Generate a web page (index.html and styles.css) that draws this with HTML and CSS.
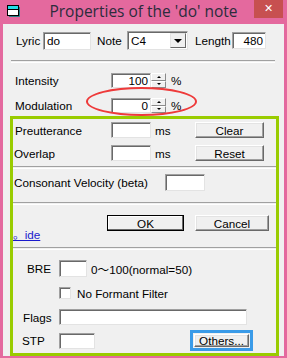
FILE: index.html
```html
<!DOCTYPE html>
<html lang="en">
<head>
  <meta charset="UTF-8">
  <title>Properties of the 'do' note</title>
  <link rel="stylesheet" href="styles.css">
</head>
<body>
  <div class="window">
    <div class="titlebar">
      <svg class="app-icon" width="13" height="12" viewBox="0 0 13 12">
        <rect x="0.5" y="0.5" width="11" height="10" fill="#fff" stroke="#000"/>
        <rect x="1" y="1" width="10" height="3" fill="#22dde8"/>
        <line x1="1" y1="4.5" x2="11" y2="4.5" stroke="#000"/>
        <path d="M12.5 2v9.5H2" stroke="#2a7f86" fill="none"/>
      </svg>
      <div class="title">Properties of the 'do' note</div>
      <div class="close">&#10005;</div>
    </div>

    <div class="client">
      <div class="row top-row">
        <span class="lbl lbl-lyric">Lyric</span>
        <span class="edit edit-lyric">do</span>
        <span class="lbl lbl-note">Note</span>
        <span class="combo">
          <span class="combo-val">C4</span>
          <span class="combo-btn"></span>
        </span>
        <span class="lbl lbl-length">Length</span>
        <span class="edit edit-length num">480</span>
      </div>

      <div class="sep sep-top"></div>

      <div class="row spin-row first">
        <span class="lbl lbl-wide">Intensity</span>
        <span class="edit edit-spin num">100</span>
        <span class="spin"><span class="spin-up"></span><span class="spin-down"></span></span>
        <span class="unit">%</span>
      </div>
      <div class="row spin-row">
        <span class="lbl lbl-wide">Modulation</span>
        <span class="edit edit-spin num">0</span>
        <span class="spin"><span class="spin-up"></span><span class="spin-down"></span></span>
        <span class="unit">%</span>
      </div>

      <div class="group">
        <div class="row ms-row first">
          <span class="lbl lbl-group pre">Preutterance</span>
          <span class="edit edit-ms"></span>
          <span class="ms">ms</span>
          <span class="btn btn-side">Clear</span>
        </div>
        <div class="row ms-row">
          <span class="lbl lbl-group">Overlap</span>
          <span class="edit edit-ms"></span>
          <span class="ms">ms</span>
          <span class="btn btn-side">Reset</span>
        </div>

        <div class="sep sep-group"></div>

        <div class="row velocity-row">
          <span class="lbl lbl-velocity">Consonant Velocity (beta)</span>
          <span class="edit edit-velocity"></span>
        </div>

        <div class="sep sep-group sep-wide"></div>

        <div class="row action-row">
          <a class="link" href="#">。ide</a>
          <span class="btn btn-ok">OK</span>
          <span class="btn btn-cancel">Cancel</span>
        </div>

        <div class="sep sep-group sep-after"></div>

        <div class="row bre-row">
          <span class="lbl lbl-bre">BRE</span>
          <span class="edit edit-bre"></span>
          <span class="hint">0〜100(normal=50)</span>
        </div>
        <div class="row check-row">
          <span class="checkbox"></span>
          <span class="check-text">No Formant Filter</span>
        </div>
        <div class="row flags-row">
          <span class="lbl lbl-flags">Flags</span>
          <span class="edit edit-flags"></span>
        </div>
        <div class="row stp-row">
          <span class="lbl lbl-stp">STP</span>
          <span class="edit edit-stp"></span>
          <span class="focus-box"><span class="btn btn-others">Others...</span></span>
        </div>
      </div>

      <div class="mark"></div>
    </div>
  </div>
</body>
</html>
```

FILE: styles.css
```css
body {
  margin: 0;
  font-family: 'Liberation Sans', Arial, 'Noto Sans CJK JP', sans-serif;
  font-size: 11.7px;
  color: #000;
}
.window {
  width: 287px;
  height: 358px;
  box-sizing: border-box;
  background: #e4699e;
  padding: 0 3px 2px 3px;
  display: flex;
  flex-direction: column;
}
.titlebar {
  height: 26px;
  display: grid;
  grid-template-columns: 1fr auto 1fr;
  align-items: start;
}
.app-icon {
  margin: 5px 0 0 4px;
}
.title {
  font-family: 'Open Sans', 'Liberation Sans', sans-serif;
  font-size: 15.5px;
  line-height: 22px;
  color: #2c2c3c;
  white-space: nowrap;
}
.close {
  justify-self: end;
  width: 29px;
  height: 18px;
  margin-right: 1px;
  background: #c75050;
  color: #fff;
  font-family: 'DejaVu Sans', sans-serif;
  font-size: 11px;
  font-weight: bold;
  line-height: 18px;
  text-align: center;
}
.client {
  flex: 1;
  position: relative;
  background: #f0f0f0;
  padding: 0 5px 0 7px;
}
.row {
  display: flex;
  align-items: center;
}
.lbl {
  white-space: nowrap;
}

/* sunken fields */
.edit {
  box-sizing: border-box;
  background: #fff;
  border-top: 1px solid #a0a0a0;
  border-left: 1px solid #a0a0a0;
  border-right: 1px solid #e3e3e3;
  border-bottom: 1px solid #e3e3e3;
  box-shadow: inset 1px 1px #696969;
  padding: 0 2px 0 3px;
  display: flex;
  align-items: center;
  white-space: nowrap;
}
.edit.num {
  justify-content: flex-end;
}

/* raised buttons */
.btn {
  box-sizing: border-box;
  background: #f0f0f0;
  border: 1px solid;
  border-color: #fff #696969 #696969 #fff;
  box-shadow: inset -1px -1px #a0a0a0, inset 1px 1px #e3e3e3;
  display: flex;
  align-items: center;
  justify-content: center;
  white-space: nowrap;
}

.sep {
  height: 1px;
  border-top: 1px solid #a0a0a0;
  border-bottom: 1px solid #fff;
}

/* top row */
.top-row {
  margin-top: 7px;
  height: 19px;
  padding-left: 6px;
}
.lbl-lyric { width: 27px; }
.edit-lyric { width: 48px; height: 18px; margin-right: 6px; }
.lbl-note { width: 30px; }
.combo {
  box-sizing: border-box;
  width: 61px;
  height: 19px;
  background: #fff;
  border-top: 1px solid #a0a0a0;
  border-left: 1px solid #a0a0a0;
  border-right: 1px solid #e3e3e3;
  border-bottom: 1px solid #e3e3e3;
  box-shadow: inset 1px 1px #696969;
  display: flex;
  align-items: center;
  padding: 1px 1px 1px 3px;
  margin-right: 7px;
}
.combo-val { flex: 1; }
.combo-btn {
  box-sizing: border-box;
  width: 16px;
  height: 15px;
  background: #f0f0f0;
  border: 1px solid;
  border-color: #e3e3e3 #696969 #696969 #e3e3e3;
  display: flex;
  align-items: center;
  justify-content: center;
}
.combo-btn::after {
  content: '';
  border-left: 4px solid transparent;
  border-right: 4px solid transparent;
  border-top: 4px solid #000;
}
.lbl-length { width: 37px; }
.edit-length { width: 34px; height: 17px; }

.sep-top {
  margin: 10px 4px 0 1px;
}

/* spin rows */
.spin-row {
  height: 15px;
  margin-top: 10px;
}
.spin-row.first { margin-top: 10px; }
.lbl-wide {
  width: 96px;
  padding-left: 5px;
}
.edit-spin { width: 40px; height: 15px; }
.spin {
  display: flex;
  flex-direction: column;
  width: 15px;
  height: 15px;
}
.spin-up, .spin-down {
  flex: 1;
  box-sizing: border-box;
  background: #f0f0f0;
  border: 1px solid;
  border-color: #fff #8a8a8a #8a8a8a #fff;
  display: flex;
  align-items: center;
  justify-content: center;
}
.spin-up::after {
  content: '';
  border-left: 2px solid transparent;
  border-right: 2px solid transparent;
  border-bottom: 2px solid #000;
}
.spin-down::after {
  content: '';
  border-left: 2px solid transparent;
  border-right: 2px solid transparent;
  border-top: 2px solid #000;
}
.unit {
  margin-left: 5px;
}

/* green group */
.group {
  margin-top: 3px;
  width: 269px;
  box-sizing: border-box;
  border: 3px solid #99cc00;
  padding-bottom: 2px;
}
.ms-row {
  height: 16px;
  margin-top: 7px;
}
.ms-row.first { margin-top: 3px; }
.lbl-group {
  width: 97px;
  padding-left: 1px;
}
.lbl-group.pre {
  width: 96px;
  padding-left: 2px;
}
.edit-ms { width: 40px; height: 16px; }
.ms {
  width: 44px;
  padding-left: 4px;
  box-sizing: border-box;
}
.btn-side { width: 69px; height: 16px; }

.sep-group { margin-top: 5px; }
.velocity-row {
  height: 17px;
  margin-top: 5px;
}
.lbl-velocity {
  width: 151px;
  padding-left: 1px;
}
.edit-velocity { width: 40px; height: 17px; }
.sep-wide { margin-top: 11px; }

.action-row {
  align-items: flex-start;
  margin-top: 10px;
  height: 27px;
}
.link {
  margin-top: 13px;
  line-height: 14px;
  color: #1a1acd;
  text-decoration: underline;
}
.btn-ok {
  margin-left: auto;
  width: 77px;
  height: 16px;
  border-color: #000;
  box-shadow: inset -1px -1px #696969, inset 1px 1px #fff;
}
.btn-cancel {
  width: 74px;
  height: 16px;
  margin-left: 11px;
  margin-right: 7px;
}
.sep-after { margin-top: 5px; }

.bre-row {
  height: 17px;
  margin-top: 10px;
}
.lbl-bre { width: 32px; padding-left: 14px; }
.edit-bre { width: 28px; height: 17px; }
.hint { margin-left: 4px; }

.check-row {
  height: 12px;
  margin-top: 10px;
  padding-left: 46px;
}
.checkbox {
  box-sizing: border-box;
  width: 12px;
  height: 12px;
  background: #fff;
  border-top: 1px solid #a0a0a0;
  border-left: 1px solid #a0a0a0;
  border-right: 1px solid #e3e3e3;
  border-bottom: 1px solid #e3e3e3;
  box-shadow: inset 1px 1px #696969;
}
.check-text { margin-left: 6px; }

.flags-row {
  height: 16px;
  margin-top: 10px;
}
.lbl-flags { width: 36px; padding-left: 10px; }
.edit-flags { width: 188px; height: 16px; }

.stp-row {
  height: 21px;
  margin-top: 5px;
}
.lbl-stp { width: 37px; padding-left: 9px; }
.edit-stp { width: 36px; height: 16px; }
.focus-box {
  margin-left: auto;
  margin-right: 23px;
  border: 3px solid #3a9be8;
  padding: 1px;
  display: flex;
}
.btn-others { width: 55px; height: 13px; }

/* red annotation ellipse */
.mark {
  position: absolute;
  left: 83px;
  top: 63px;
  width: 111px;
  height: 29px;
  box-sizing: border-box;
  border: 2.5px solid #ee3a3a;
  border-radius: 50%;
}
```
